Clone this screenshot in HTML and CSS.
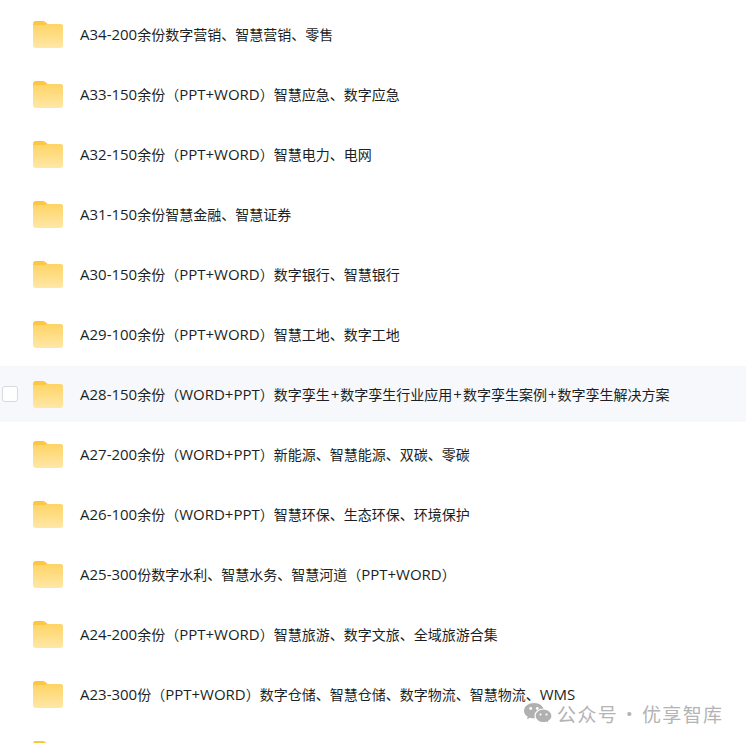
FILE: index.html
```html
<!DOCTYPE html>
<html lang="en">
  <head>
    <meta charset="UTF-8" />
    <title>文件列表</title>
    <link rel="stylesheet" href="styles.css">
  </head>
  <body>
    <svg class="defs" width="0" height="0">
      <defs>
        <linearGradient id="folder-back" x1="0" y1="0" x2="0" y2="1">
          <stop offset="0" stop-color="#fdc43c" />
          <stop offset="1" stop-color="#fdd060" />
        </linearGradient>
        <linearGradient id="folder-front" x1="0" y1="0" x2="0" y2="1">
          <stop offset="0" stop-color="#fed466" />
          <stop offset="1" stop-color="#ffe7a6" />
        </linearGradient>
        <symbol id="folder" viewBox="0 0 30 27">
          <path fill="url(#folder-back)" d="M0 3C0 1 1 0 3 0h6c2 0 3 .7 4 1.6L15 3.200h12c2 0 3 1 3 3V12H0z" />
          <path fill="url(#folder-front)" d="M0 5.500c0-1 .8-1.500 1.800-1.500H9c2 0 3.500 0 4.500-.6 1-.5 1.500-.4 2.500-.4h11c2 0 3 1 3 3V24c0 2-1 3-3 3H3c-2 0-3-1-3-3z" />
        </symbol>
      </defs>
    </svg>

    <ul class="file-list">
      <li class="row"><svg class="folder"><use href="#folder" /></svg><span class="name"><span class="lat">A34-200</span>余份数字营销、智慧营销、零售</span></li>
      <li class="row"><svg class="folder"><use href="#folder" /></svg><span class="name"><span class="lat">A33-150</span>余份（<span class="lat">PPT+WORD</span>）智慧应急、数字应急</span></li>
      <li class="row"><svg class="folder"><use href="#folder" /></svg><span class="name"><span class="lat">A32-150</span>余份（<span class="lat">PPT+WORD</span>）智慧电力、电网</span></li>
      <li class="row"><svg class="folder"><use href="#folder" /></svg><span class="name"><span class="lat">A31-150</span>余份智慧金融、智慧证券</span></li>
      <li class="row"><svg class="folder"><use href="#folder" /></svg><span class="name"><span class="lat">A30-150</span>余份（<span class="lat">PPT+WORD</span>）数字银行、智慧银行</span></li>
      <li class="row"><svg class="folder"><use href="#folder" /></svg><span class="name"><span class="lat">A29-100</span>余份（<span class="lat">PPT+WORD</span>）智慧工地、数字工地</span></li>
      <li class="row hovered"><span class="check"></span><svg class="folder"><use href="#folder" /></svg><span class="name"><span class="lat">A28-150</span>余份（<span class="lat">WORD+PPT</span>）数字孪生<span class="plus">+</span>数字孪生行业应用<span class="plus">+</span>数字孪生案例<span class="plus">+</span>数字孪生解决方案</span></li>
      <li class="row"><svg class="folder"><use href="#folder" /></svg><span class="name"><span class="lat">A27-200</span>余份（<span class="lat">WORD+PPT</span>）新能源、智慧能源、双碳、零碳</span></li>
      <li class="row"><svg class="folder"><use href="#folder" /></svg><span class="name"><span class="lat">A26-100</span>余份（<span class="lat">WORD+PPT</span>）智慧环保、生态环保、环境保护</span></li>
      <li class="row"><svg class="folder"><use href="#folder" /></svg><span class="name"><span class="lat">A25-300</span>份数字水利、智慧水务、智慧河道（<span class="lat">PPT+WORD</span>）</span></li>
      <li class="row"><svg class="folder"><use href="#folder" /></svg><span class="name"><span class="lat">A24-200</span>余份（<span class="lat">PPT+WORD</span>）智慧旅游、数字文旅、全域旅游合集</span></li>
      <li class="row"><svg class="folder"><use href="#folder" /></svg><span class="name"><span class="lat">A23-300</span>份（<span class="lat">PPT+WORD</span>）数字仓储、智慧仓储、数字物流、智慧物流、<span class="lat">WMS</span></span></li>
      <li class="row"><svg class="folder"><use href="#folder" /></svg></li>
    </ul>

    <!-- watermark sits on top of the list -->
    <div class="watermark">
      <svg class="wechat" viewBox="0 0 28 21">
        <path fill="#b0b0b0" d="M10 0C4.500 0 0 3.400 0 7.700c0 2.500 1.400 4.600 3.700 6L3 16.200l3-1.500c1.200.4 2.600.6 4 .6 5.500 0 10-3.400 10-7.600S15.500 0 10 0z" />
        <path fill="#b0b0b0" stroke="#fff" stroke-width="1.200" d="M19.500 6C14.800 6 11 9 11 12.800s3.800 6.800 8.500 6.800c1 0 2-.1 2.900-.4l2.800 1.500-.7-2.400c2.100-1.200 3.500-3.200 3.500-5.500C28 9 24.200 6 19.500 6z" />
        <circle fill="#fff" cx="6.700" cy="5.500" r="1.400" />
        <circle fill="#fff" cx="13.300" cy="5.500" r="1.400" />
        <circle fill="#fff" cx="16.500" cy="11.500" r="1.100" />
        <circle fill="#fff" cx="22.500" cy="11.500" r="1.100" />
      </svg>
      <span class="wm-text">公众号 · 优享智库</span>
    </div>
  </body>
</html>
```

FILE: styles.css
```css
* {
  margin: 0;
  padding: 0;
  box-sizing: border-box;
}

html,
body {
  height: 743px;
  overflow: hidden;
}

body {
  position: relative;
  background: #fff;
  font-family: "Noto Sans CJK SC", sans-serif;
  color: #1c1f24;
}

.defs {
  position: absolute;
}

.file-list {
  list-style: none;
  display: flex;
  flex-direction: column;
  gap: 4px;
  height: 743px;
  padding-top: 6px;
  overflow: hidden;
}

.row {
  position: relative;
  flex: none;
  display: flex;
  align-items: center;
  height: 56px;
  padding-left: 33px;
}

.hovered {
  background: #f6f8fb;
}

.check {
  position: absolute;
  left: 2px;
  top: 20px;
  width: 16px;
  height: 16px;
  background: #fff;
  border: 1px solid #d8dadf;
  border-radius: 3px;
}

.folder {
  flex: none;
  width: 30px;
  height: 27px;
  margin-right: 17px;
}

.name {
  font-size: 14px;
  line-height: 18px;
  white-space: nowrap;
}

/* latin runs look a size bigger than the chinese next to them */
.lat,
.plus {
  font-family: "Open Sans", sans-serif;
  font-size: 15px;
  line-height: 18px;
}

.plus {
  padding: 0 1px;
}

.watermark {
  position: absolute;
  left: 524px;
  top: 703px;
  display: flex;
  align-items: center;
  gap: 5px;
  height: 21px;
  font-family: "Noto Sans CJK SC", sans-serif;
  font-size: 19px;
  line-height: 18px;
  letter-spacing: 1.4px;
  word-spacing: -4px;
  color: #b4b4b4;
  white-space: nowrap;
}

.wechat {
  flex: none;
  width: 28px;
  height: 21px;
}
```
